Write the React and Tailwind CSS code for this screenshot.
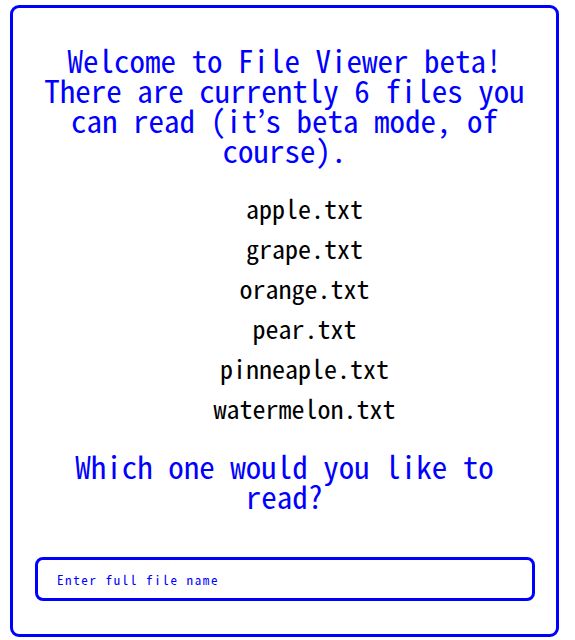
const files = ['apple.txt', 'grape.txt', 'orange.txt', 'pear.txt', 'pinneaple.txt', 'watermelon.txt'];

const mono = "font-['Noto_Sans_Mono_CJK_JP','Liberation_Mono',monospace]";

export default function App() {
  return (
    <div className="w-[575px] h-[640px] bg-white pt-[5px] pl-[10px]">
      <div className={`w-[549px] h-[632px] border-[3px] border-[#0000ff] rounded-[9px] pt-[37px] ${mono}`}>
        {/* Intro */}
        <h1 className="px-[28px] text-center text-[31px] leading-[30px] font-normal text-[#0000ff]">
          Welcome to File Viewer beta! There are currently 6 files you can read (it’s beta mode, of course).
        </h1>

        {/* File list */}
        <ul className="mt-[22px] pl-[40px] text-center">
          {files.map((f) => (
            <li key={f} className="h-[40px] flex items-center justify-center text-[26px] text-black">
              {f}
            </li>
          ))}
        </ul>

        <h2 className="mt-[24px] px-[28px] text-center text-[31px] leading-[30px] font-normal text-[#0000ff]">
          Which one would you like to read?
        </h2>

        <div className="mt-[46px] pl-[22px] pr-[21px]">
          <input
            type="text"
            placeholder="Enter full file name"
            className="w-full h-[44px] border-[3px] border-[#0000ff] rounded-[8px] pl-[19px] text-[13px] tracking-[1.6px] text-[#0000ff] placeholder:text-[#0000ff] outline-none"
          />
        </div>
      </div>
    </div>
  );
}
